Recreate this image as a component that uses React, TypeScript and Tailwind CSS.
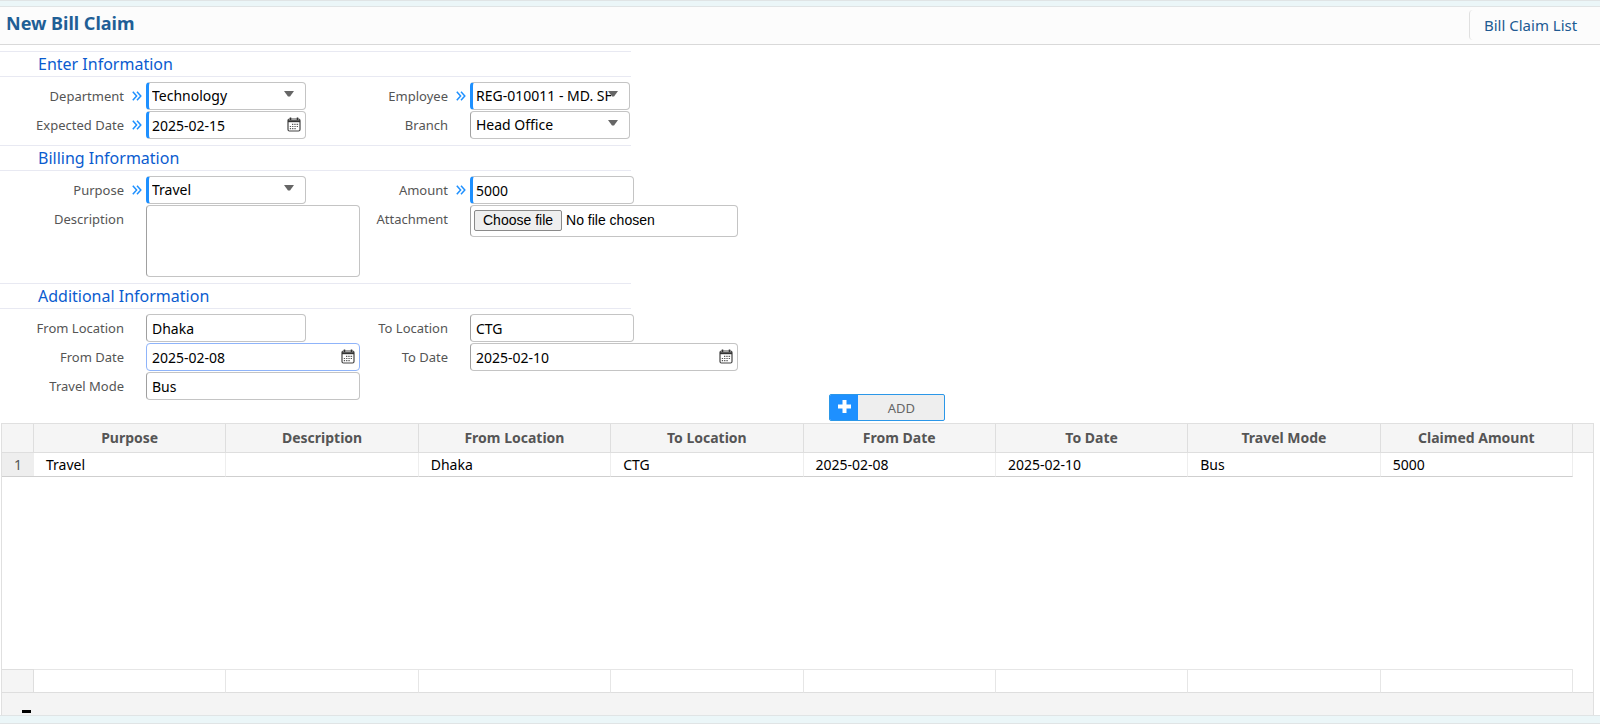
import type { ReactNode } from "react";
import clsx from "clsx";

const columns = [
  "Purpose",
  "Description",
  "From Location",
  "To Location",
  "From Date",
  "To Date",
  "Travel Mode",
  "Claimed Amount",
];

const rows = [["Travel", "", "Dhaka", "CTG", "2025-02-08", "2025-02-10", "Bus", "5000"]];

const controlBase =
  "block w-full h-7 rounded border bg-white text-sm text-black outline-none font-['Noto_Sans',sans-serif]";

function borderFor(required?: boolean, focused?: boolean) {
  if (required) return "pl-[3px] border-[#c4c4c4] border-l-[3px] border-l-[#1e90ff]";
  if (focused) return "pl-[5px] border-[#8fb4fa]";
  return "pl-[5px] border-[#c4c4c4] border-l-[#a0a0a0]";
}

function RequiredMark() {
  return (
    <svg width="10" height="10" viewBox="0 0 10 10" fill="none" stroke="#1e90ff" strokeWidth="1.5" aria-hidden="true">
      <path d="M0.8 0.8 L4.6 5 L0.8 9.2 M5 0.8 L8.8 5 L5 9.2" />
    </svg>
  );
}

function CalendarIcon() {
  return (
    <svg width="14" height="15" viewBox="0 0 14 15" fill="none" aria-hidden="true">
      <rect x="1" y="2" width="12" height="12" rx="1.5" stroke="#444" strokeWidth="1.2" />
      <path d="M1 4.2H13" stroke="#333" strokeWidth="2" />
      <path d="M3.5 0.5V3M10.5 0.5V3" stroke="#333" strokeWidth="1.5" />
      <path d="M5 7.3H12M2.8 9.5H12M2.8 11.7H9.5" stroke="#555" strokeWidth="1.2" strokeDasharray="1.3 1" />
    </svg>
  );
}

type FieldProps = {
  id: string;
  label: string;
  required?: boolean;
  children: ReactNode;
};

// One field fills three grid cells: label, required mark, control
function Field({ id, label, required, children }: FieldProps) {
  return (
    <>
      <label htmlFor={id} className="h-7 text-right text-[13px] leading-7 text-[#555] whitespace-nowrap">
        {label}
      </label>
      <div className="flex h-7 items-center justify-end pr-1">{required && <RequiredMark />}</div>
      <div>{children}</div>
    </>
  );
}

function SelectBox({ id, value, required }: { id: string; value: string; required?: boolean }) {
  return (
    <div className="relative w-40">
      <select
        id={id}
        defaultValue={value}
        className={clsx(controlBase, "appearance-none pr-[18px]", borderFor(required))}
      >
        <option>{value}</option>
      </select>
      <svg
        className="pointer-events-none absolute right-3 top-[9px]"
        width="10"
        height="6"
        viewBox="0 0 10 6"
        aria-hidden="true"
      >
        <path d="M0 0H10L6 5.5H4Z" fill="#666" />
      </svg>
    </div>
  );
}

function TextBox({ id, value, required }: { id: string; value: string; required?: boolean }) {
  return <input id={id} type="text" defaultValue={value} className={clsx(controlBase, borderFor(required))} />;
}

function DateBox({
  id,
  value,
  required,
  focused,
}: {
  id: string;
  value: string;
  required?: boolean;
  focused?: boolean;
}) {
  return (
    <div className="relative">
      <input
        id={id}
        type="text"
        defaultValue={value}
        className={clsx(controlBase, "pr-6", borderFor(required, focused))}
      />
      <button type="button" aria-label="Open calendar" className="absolute right-[5px] top-[6px]">
        <CalendarIcon />
      </button>
    </div>
  );
}

function Section({ title, children }: { title: string; children: ReactNode }) {
  return (
    <section className="pb-[6px]">
      <h2 className="h-[26px] w-[631px] border-y border-[#e8e9f2] pl-[38px] text-base leading-6 text-[#0b5ccf]">
        {title}
      </h2>
      <div className="grid grid-cols-[124px_22px_214px_88px_22px_268px] items-start gap-y-px pt-[5px]">{children}</div>
    </section>
  );
}

export default function App() {
  return (
    <div className="min-h-screen bg-white font-['Noto_Sans',sans-serif] text-[#555]">
      <div className="h-[7px] border-y border-[#e0e4e5] bg-[#ebf6f8]" />
      <header className="flex h-[38px] items-start justify-between border-b border-[#d9d9d9] bg-[#fcfcfc]">
        <h1 className="pl-[6px] text-lg font-bold leading-8 text-[#1f5f96]">New Bill Claim</h1>
        <a
          href="#list"
          className="mt-[3px] h-[30px] w-[131px] rounded-l border-l border-[#e0e0e0] pl-[14px] text-[15px] leading-[30px] text-[#205a92]"
        >
          Bill Claim List
        </a>
      </header>

      <form className="pt-[6px]">
        <Section title="Enter Information">
          <Field id="department" label="Department" required>
            <SelectBox id="department" value="Technology" required />
          </Field>
          <Field id="employee" label="Employee" required>
            <SelectBox id="employee" value="REG-010011 - MD. SH" required />
          </Field>
          <Field id="expected-date" label="Expected Date" required>
            <div className="w-40">
              <DateBox id="expected-date" value="2025-02-15" required />
            </div>
          </Field>
          <Field id="branch" label="Branch">
            <SelectBox id="branch" value="Head Office" />
          </Field>
        </Section>

        <Section title="Billing Information">
          <Field id="purpose" label="Purpose" required>
            <SelectBox id="purpose" value="Travel" required />
          </Field>
          <Field id="amount" label="Amount" required>
            <div className="w-[164px]">
              <TextBox id="amount" value="5000" required />
            </div>
          </Field>
          <Field id="description" label="Description">
            <textarea
              id="description"
              className="block h-[72px] w-full resize-none rounded border border-[#c4c4c4] border-l-[#a0a0a0] bg-white outline-none"
            />
          </Field>
          <Field id="attachment" label="Attachment">
            <label
              htmlFor="attachment"
              className="relative flex h-8 items-center gap-1 rounded border border-[#c4c4c4] border-l-[#a0a0a0] pb-0.5 pl-[3px] font-['Liberation_Sans',sans-serif] text-sm text-black"
            >
              <input id="attachment" type="file" className="sr-only" />
              <span className="h-[21px] rounded-xs border border-[#8a8a8a] bg-[#efefef] px-2 leading-[18px]">
                Choose file
              </span>
              <span>No file chosen</span>
            </label>
          </Field>
        </Section>

        <Section title="Additional Information">
          <Field id="from-location" label="From Location">
            <div className="w-40">
              <TextBox id="from-location" value="Dhaka" />
            </div>
          </Field>
          <Field id="to-location" label="To Location">
            <div className="w-[164px]">
              <TextBox id="to-location" value="CTG" />
            </div>
          </Field>
          <Field id="from-date" label="From Date">
            <DateBox id="from-date" value="2025-02-08" focused />
          </Field>
          <Field id="to-date" label="To Date">
            <DateBox id="to-date" value="2025-02-10" />
          </Field>
          <Field id="travel-mode" label="Travel Mode">
            <TextBox id="travel-mode" value="Bus" />
          </Field>
        </Section>
      </form>

      <main className="-mt-3 ml-px mr-[6px]">
        <button
          type="button"
          className="mb-0.5 ml-[52%] flex h-[27px] w-[116px] overflow-hidden rounded-xs border border-[#2b97e8] bg-[#eee] text-[13px] text-[#666]"
        >
          <span className="flex h-full w-7 items-center justify-center bg-[#1e90ff] pb-0.5">
            <svg width="13" height="13" viewBox="0 0 13 13" aria-hidden="true">
              <path d="M6.5 0V13M0 6.5H13" stroke="#fff" strokeWidth="4" />
            </svg>
          </span>
          <span className="flex-1 leading-[26px]">ADD</span>
        </button>

        <div className="border border-[#e0e0e0] border-b-0">
          <table className="w-full table-fixed border-separate border-spacing-0 text-sm">
            <thead>
              <tr className="h-[29px] bg-[#f5f5f5]">
                <th className="w-8 border-b border-r border-[#dedede]" />
                {columns.map((column) => (
                  <th key={column} className="border-b border-r border-[#dedede] font-bold leading-5">
                    {column}
                  </th>
                ))}
                <th className="w-5 border-b border-[#dedede]" />
              </tr>
            </thead>
            <tbody className="text-black">
              {rows.map((row, index) => (
                <tr key={index} className="h-6">
                  <td className="border-b border-[#cfcfcf] bg-[#eee] text-center text-[#555]">{index + 1}</td>
                  {row.map((cell, i) => (
                    <td key={columns[i]} className="border-b border-r border-b-[#cfcfcf] border-r-[#eee] pl-3">
                      {cell}
                    </td>
                  ))}
                  <td />
                </tr>
              ))}
              <tr className="h-48">
                <td colSpan={10} />
              </tr>
            </tbody>
            <tfoot>
              <tr className="h-6">
                <td className="border-b border-r border-t border-[#dedede] bg-[#f5f5f5]" />
                {columns.map((column) => (
                  <td key={column} className="border-b border-r border-t border-[#e6e6e6] border-b-[#dedede]" />
                ))}
                <td className="border-b border-[#dedede]" />
              </tr>
            </tfoot>
          </table>
          <div className="flex h-[22px] items-end bg-[#f4f4f4] pb-0.5 pl-5">
            <div className="h-[3px] w-[9px] bg-black" />
          </div>
        </div>
      </main>
      <footer className="h-[9px] border-y border-[#e0e4e5] bg-[#ebf6f8]" />
    </div>
  );
}
